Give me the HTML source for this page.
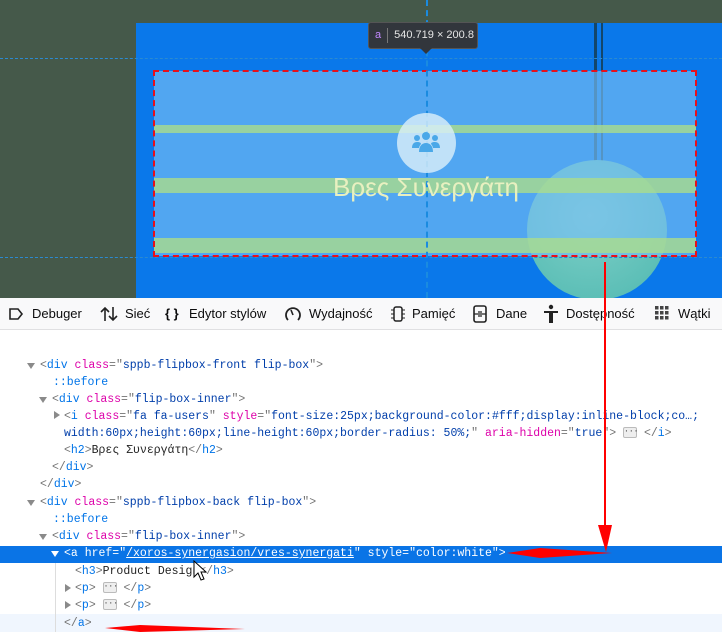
<!DOCTYPE html>
<html><head><meta charset="utf-8"><style>
*{margin:0;padding:0;box-sizing:border-box}
body{width:722px;height:632px;overflow:hidden;background:#fff;position:relative;font-family:"Liberation Sans","DejaVu Sans",sans-serif}
.abs{position:absolute}
.tb{position:absolute;top:298px;left:0;width:722px;height:32px;background:#f9f9fa;border-bottom:1px solid #e0e0e2;font-size:13px;color:#0c0c0d}
.tb span{position:absolute;top:8px;white-space:nowrap}
.code{position:absolute;left:0;top:356px;width:722px;font-family:"Liberation Mono","DejaVu Sans Mono",monospace;font-size:11.5px;color:#737373}
.ln{position:absolute;height:17px;line-height:17px;white-space:nowrap}
.t{color:#0074e8}.a{color:#dd00a9}.v{color:#003eaa}.p{color:#0074e8}
.tri{position:absolute;width:0;height:0;border-left:4px solid transparent;border-right:4px solid transparent;border-top:6px solid #8a8a8a}
.trr{position:absolute;width:0;height:0;border-top:4px solid transparent;border-bottom:4px solid transparent;border-left:6px solid #8a8a8a}
.dots{display:inline-block;width:14px;height:11px;border:1px solid #bbb;background:#eee;border-radius:2px;font-size:8px;line-height:7px;text-align:center;vertical-align:middle;color:#333}
</style></head><body>
<div class="abs" style="left:0;top:0;width:722px;height:298px;background:#45594a"></div>
<div class="abs" style="left:136px;top:23px;width:586px;height:275px;background:#0a78ea"></div>
<!-- cords -->
<div class="abs" style="left:594px;top:23px;width:3px;height:140px;background:#13466a"></div>
<div class="abs" style="left:601px;top:23px;width:2px;height:140px;background:#13466a"></div>
<!-- sphere -->
<div class="abs" style="left:527px;top:160px;width:140px;height:140px;border-radius:50%;background:radial-gradient(circle at 45% 40%,#7fd0c8,#4fb8b0)"></div>
<!-- overlay -->
<div class="abs" style="left:154px;top:71px;width:542px;height:185px;background:rgba(120,190,245,0.65)"></div>
<div class="abs" style="left:154px;top:125px;width:542px;height:8px;background:rgba(170,220,140,0.8)"></div>
<div class="abs" style="left:154px;top:178px;width:542px;height:15px;background:rgba(170,220,140,0.8)"></div>
<div class="abs" style="left:154px;top:238px;width:542px;height:15px;background:rgba(170,220,140,0.8)"></div>
<div class="abs" style="left:153px;top:70px;width:544px;height:187px;border:2px dashed #e8101a"></div>
<!-- guides -->
<div class="abs" style="left:0;top:58px;width:722px;border-top:1px dashed #2b8ad0"></div>
<div class="abs" style="left:0;top:257px;width:722px;border-top:1px dashed #2b8ad0"></div>
<div class="abs" style="left:426px;top:0;height:298px;border-left:2px dashed #1a8be0"></div>
<!-- icon -->
<div class="abs" style="left:397px;top:113px;width:59px;height:60px;border-radius:50%;background:rgba(220,240,250,0.8)"></div>
<svg class="abs" style="left:410px;top:130px" width="32" height="26" viewBox="0 0 32 26"><g fill="#4aa8e8"><circle cx="16" cy="6" r="4"/><circle cx="7" cy="8" r="3"/><circle cx="25" cy="8" r="3"/><path d="M9 22c0-6 3-9 7-9s7 3 7 9z"/><path d="M2 18c0-4 2-6 5-6s4 1 4 2c-1 1-2 3-2 4z"/><path d="M30 18c0-4-2-6-5-6s-4 1-4 2c1 1 2 3 2 4z"/></g></svg>
<div class="abs" style="left:300px;top:172px;width:252px;text-align:center;font-size:26px;color:#e8f0c0">Βρες Συνεργάτη</div>
<!-- tooltip -->
<div class="abs" style="left:368px;top:22px;width:110px;height:27px;background:#32363c;border:1px solid #555;border-radius:3px;font-size:11px;color:#e6e6e6;line-height:25px"><span style="color:#c388ff;margin-left:6px">a</span><span style="display:inline-block;width:1px;height:15px;background:#777;vertical-align:middle;margin:0 6px"></span>540.719 × 200.8</div>
<div class="abs" style="left:420px;top:48px;width:0;height:0;border-left:6px solid transparent;border-right:6px solid transparent;border-top:6px solid #32363c"></div>
<!-- toolbar -->
<div class="tb">
<svg class="abs" style="left:8px;top:9px" width="16" height="14"><path d="M2 2h8l4 5-4 5H2z" fill="none" stroke="#222" stroke-width="1.6"/></svg><span style="left:32px">Debuger</span>
<svg class="abs" style="left:100px;top:7px" width="18" height="18"><path d="M5 16V3M1 7l4-4 4 4M13 2v13M9 11l4 4 4-4" fill="none" stroke="#222" stroke-width="1.6"/></svg><span style="left:125px">Sieć</span>
<span style="left:165px;font-weight:bold">{ }</span><span style="left:189px">Edytor stylów</span>
<svg class="abs" style="left:284px;top:7px" width="18" height="18"><path d="M4 15A7 7 0 1 1 14 15" fill="none" stroke="#222" stroke-width="1.8"/><path d="M9 10l-2-5" stroke="#222" stroke-width="1.6"/></svg><span style="left:309px">Wydajność</span>
<svg class="abs" style="left:390px;top:7px" width="16" height="18"><rect x="4" y="2" width="8" height="14" rx="2" fill="none" stroke="#222" stroke-width="1.5"/><path d="M1 5h3M1 9h3M1 13h3M12 5h3M12 9h3M12 13h3" stroke="#222"/></svg><span style="left:412px">Pamięć</span>
<svg class="abs" style="left:472px;top:6px" width="16" height="20"><rect x="2" y="2" width="12" height="16" rx="2" fill="none" stroke="#222" stroke-width="1.6"/><path d="M6 8h4M6 12h4M2 10h12" stroke="#222" stroke-width="1.3"/></svg><span style="left:496px">Dane</span>
<svg class="abs" style="left:543px;top:6px" width="16" height="20"><circle cx="8" cy="3" r="2.2" fill="#222"/><path d="M1 7h14v2h-5v10H6V9H1z" fill="#222"/></svg><span style="left:566px">Dostępność</span>
<svg class="abs" style="left:654px;top:7px" width="16" height="16"><g fill="#444"><rect x="1" y="1" width="3.5" height="3.5"/><rect x="6" y="1" width="3.5" height="3.5"/><rect x="11" y="1" width="3.5" height="3.5"/><rect x="1" y="6" width="3.5" height="3.5"/><rect x="6" y="6" width="3.5" height="3.5"/><rect x="11" y="6" width="3.5" height="3.5"/><rect x="1" y="11" width="3.5" height="3.5"/><rect x="6" y="11" width="3.5" height="3.5"/><rect x="11" y="11" width="3.5" height="3.5"/></g></svg><span style="left:678px">Wątki</span>
</div>
<!-- code -->
<div class="abs" style="left:0;top:546px;width:722px;height:17px;background:#0a74e6"></div>
<div class="abs" style="left:0;top:614px;width:722px;height:18px;background:#f0f6fe"></div>
<div class="abs" style="left:55px;top:563px;height:69px;border-left:1px solid #ddd"></div>
<div class="code" style="top:0">
<div class="tri" style="left:27px;top:363px"></div><div class="ln" style="left:40px;top:357px">&lt;<span class="t">div</span> <span class="a">class</span>="<span class="v">sppb-flipbox-front flip-box</span>"&gt;</div>
<div class="ln p" style="left:53px;top:374px">::before</div>
<div class="tri" style="left:39px;top:397px"></div><div class="ln" style="left:52px;top:391px">&lt;<span class="t">div</span> <span class="a">class</span>="<span class="v">flip-box-inner</span>"&gt;</div>
<div class="trr" style="left:54px;top:411px"></div><div class="ln" style="left:64px;top:408px">&lt;<span class="t">i</span> <span class="a">class</span>="<span class="v">fa fa-users</span>" <span class="a">style</span>="<span class="v">font-size:25px;background-color:#fff;display:inline-block;co…;</span></div>
<div class="ln" style="left:64px;top:425px"><span class="v">width:60px;height:60px;line-height:60px;border-radius: 50%;</span>" <span class="a">aria-hidden</span>="<span class="v">true</span>"&gt; <span class="dots">···</span> &lt;/<span class="t">i</span>&gt;</div>
<div class="ln" style="left:64px;top:442px">&lt;<span class="t">h2</span>&gt;<span style="color:#222">Βρες Συνεργάτη</span>&lt;/<span class="t">h2</span>&gt;</div>
<div class="ln" style="left:52px;top:459px">&lt;/<span class="t">div</span>&gt;</div>
<div class="ln" style="left:40px;top:476px">&lt;/<span class="t">div</span>&gt;</div>
<div class="tri" style="left:27px;top:500px"></div><div class="ln" style="left:40px;top:494px">&lt;<span class="t">div</span> <span class="a">class</span>="<span class="v">sppb-flipbox-back flip-box</span>"&gt;</div>
<div class="ln p" style="left:53px;top:511px">::before</div>
<div class="tri" style="left:39px;top:534px"></div><div class="ln" style="left:52px;top:528px">&lt;<span class="t">div</span> <span class="a">class</span>="<span class="v">flip-box-inner</span>"&gt;</div>
<div class="tri" style="left:51px;top:551px;border-top-color:#fff"></div><div class="ln" style="left:64px;top:545px;color:#fff">&lt;a href="<u>/xoros-synergasion/vres-synergati</u>" style="color:white"&gt;</div>
<div class="ln" style="left:75px;top:563px">&lt;<span class="t">h3</span>&gt;<span style="color:#222">Product Design</span>&lt;/<span class="t">h3</span>&gt;</div>
<div class="trr" style="left:65px;top:584px"></div><div class="ln" style="left:75px;top:580px">&lt;<span class="t">p</span>&gt; <span class="dots">···</span> &lt;/<span class="t">p</span>&gt;</div>
<div class="trr" style="left:65px;top:601px"></div><div class="ln" style="left:75px;top:597px">&lt;<span class="t">p</span>&gt; <span class="dots">···</span> &lt;/<span class="t">p</span>&gt;</div>
<div class="ln" style="left:64px;top:615px">&lt;/<span class="t">a</span>&gt;</div>
</div>
<!-- arrows -->
<svg class="abs" style="left:0;top:0" width="722" height="632">
<path d="M605 262L605 530" stroke="#f00" stroke-width="2"/>
<polygon points="598,525 612,525 606,552" fill="#f00"/>
<polygon points="612,553 540,548 507,553 540,558" fill="#f00"/>
<polygon points="245,629 140,625 105,628 140,632" fill="#f00"/>
</svg>
<svg class="abs" style="left:193px;top:560px" width="14" height="22"><path d="M1 1v16l4-4 3 7 3-1-3-7h5z" fill="#fff" stroke="#000"/></svg>
</body></html>
